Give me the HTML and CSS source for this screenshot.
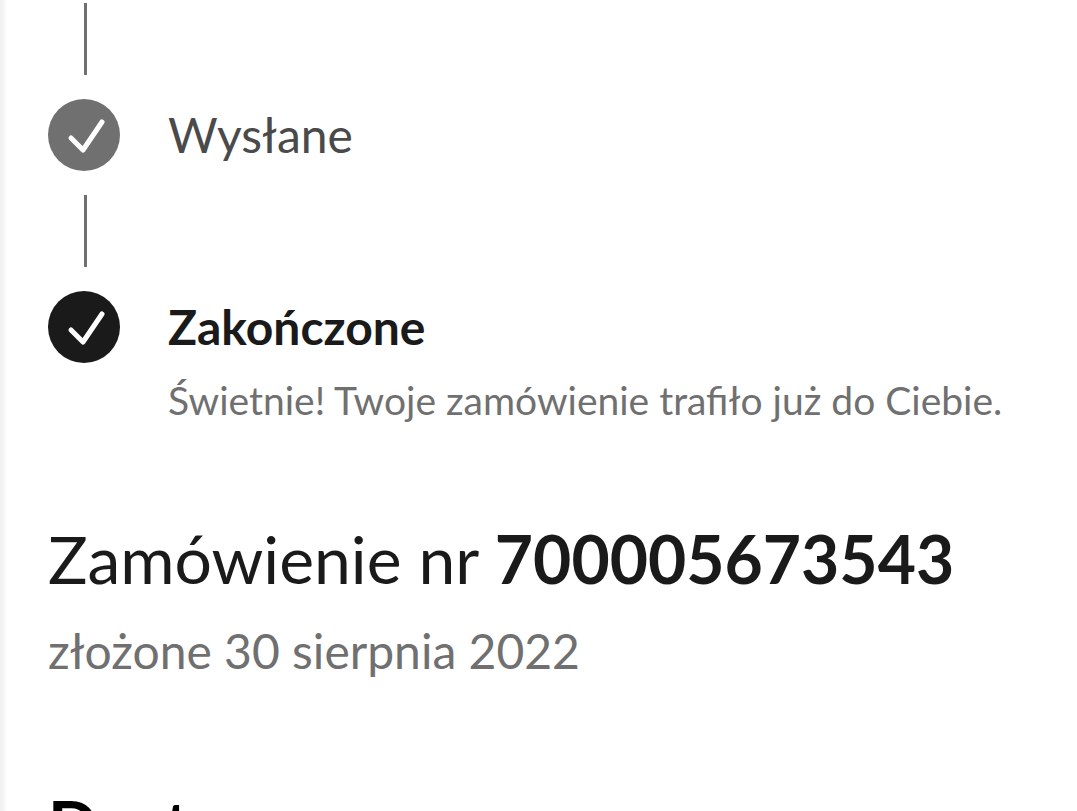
FILE: index.html
```html
<!DOCTYPE html>
<html lang="pl">
<head>
  <meta charset="UTF-8">
  <meta name="viewport" content="width=device-width, initial-scale=1">
  <title>Zamówienie nr 700005673543</title>
  <link rel="stylesheet" href="styles.css">
</head>
<body>
  <main class="order">
    <ol class="steps">
      <li class="step">
        <svg class="step-icon" viewBox="0 0 72 72" aria-hidden="true">
          <circle cx="36" cy="36" r="36"/>
          <path d="M23 39L35 51L54 23"/>
        </svg>
        <div class="step-text">
          <p class="step-name">Wysłane</p>
        </div>
      </li>
      <li class="step current">
        <svg class="step-icon" viewBox="0 0 72 72" aria-hidden="true">
          <circle cx="36" cy="36" r="36"/>
          <path d="M23 39L35 51L54 23"/>
        </svg>
        <div class="step-text">
          <p class="step-name">Zakończone</p>
          <p class="step-info">Świetnie! Twoje zamówienie trafiło już do Ciebie.</p>
        </div>
      </li>
    </ol>

    <header class="order-header">
      <h1>Zamówienie nr <strong>700005673543</strong></h1>
      <p class="order-date">złożone 30 sierpnia 2022</p>
    </header>

    <h2>Dostawa</h2>
  </main>
</body>
</html>
```

FILE: styles.css
```css
html {
  scrollbar-width: none;
}

body {
  margin: 0;
  font-family: Lato, sans-serif;
  color: #1a1a1a;
  background-color: #fff;
}

h1, h2, p {
  margin: 0;
}

.order {
  min-height: 100vh;
  box-sizing: border-box;
  padding: 0 48px;
  background: linear-gradient(to right, #f2f2f2 2px, #fff 7px);
}

.steps {
  margin: 0;
  padding: 3px 0 0;
  list-style: none;
}

.step {
  display: grid;
  grid-template-columns: 72px 1fr;
  column-gap: 48px;
}

/* line above every step */
.step::before {
  content: "";
  grid-column: 1 / -1;
  width: 3px;
  height: 72px;
  margin: 0 0 24px 36px;
  background-color: #707070;
}

.step + .step {
  margin-top: 24px;
}

.step-icon {
  width: 72px;
  height: 72px;
  fill: #707070;
}

.step-icon path {
  fill: none;
  stroke: #fff;
  stroke-width: 5;
  stroke-linecap: round;
  stroke-linejoin: round;
}

.step-name {
  font-size: 48px;
  line-height: 72px;
  color: #4a4a4a;
}

.step-info {
  font-size: 39px;
  line-height: 74px;
  color: #707070;
}

.current .step-icon {
  fill: #1a1a1a;
}

.current .step-name {
  font-weight: bold;
  color: #1a1a1a;
}

.order-header {
  margin-top: 80px;
}

h1 {
  font-size: 66px;
  font-weight: normal;
  line-height: 84px;
}

.order-date {
  margin-top: 14px;
  font-size: 48px;
  line-height: 72px;
  color: #707070;
}

h2 {
  margin-top: 96px;
  font-size: 66px;
  line-height: 84px;
  color: #000;
}
```
